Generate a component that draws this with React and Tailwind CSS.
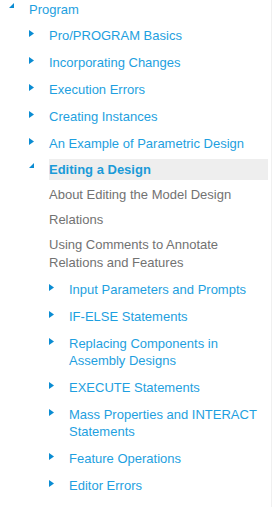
import React from 'react';

// ── Tree arrows ────────────────────────────────────────
function Closed() {
  return (
    <svg width="5" height="7" viewBox="0 0 5 7" className="shrink-0 mt-[3px]">
      <path d="M0 0L5 3.5L0 7Z" fill="#0b8cd2" />
    </svg>
  );
}

function Open() {
  return (
    <svg width="5" height="5" viewBox="0 0 5 5" className="shrink-0 mt-[2px]">
      <path d="M5 0V5H0Z" fill="#0b8cd2" />
    </svg>
  );
}

const topics = [
  'Pro/PROGRAM Basics',
  'Incorporating Changes',
  'Execution Errors',
  'Creating Instances',
  'An Example of Parametric Design',
];

const pages = [
  'About Editing the Model Design',
  'Relations',
  'Using Comments to Annotate Relations and Features',
];

const subTopics = [
  'Input Parameters and Prompts',
  'IF-ELSE Statements',
  'Replacing Components in Assembly Designs',
  'EXECUTE Statements',
  'Mass Properties and INTERACT Statements',
  'Feature Operations',
  'Editor Errors',
];

export default function App() {
  return (
    <div
      className="w-[272px] h-[507px] bg-white border-r border-[#f0f0f0] text-[13px] leading-[17px] text-[#1e9fe0]"
      style={{ fontFamily: '"Liberation Sans", Arial, sans-serif' }}
    >
      {/* Root */}
      <div className="flex pl-[9px] pt-[1px]">
        <div className="w-[20px]"><Open /></div>
        <span>Program</span>
      </div>

      {/* Level 1 */}
      <ul className="pl-[29px] pr-[3px]">
        {topics.map((t, i) => (
          <li key={t} className={`flex ${i === 0 ? 'mt-[9px]' : 'mt-[10px]'}`}>
            <div className="w-[20px]"><Closed /></div>
            <span>{t}</span>
          </li>
        ))}
        <li className="flex mt-[7px]">
          <div className="w-[20px] pt-[2px]"><Open /></div>
          <div className="flex-1">
            <div className="bg-[#eeeeee] py-[2px] font-bold text-[#1a9ad8]">Editing a Design</div>

            {/* Pages */}
            <ul className="text-[#727272] leading-[18px] mt-[6px]">
              {pages.map((p, i) => (
                <li key={p} className={i === 0 ? '' : 'mt-[7px]'}>{p}</li>
              ))}
            </ul>

            {/* Level 2 */}
            <ul className="mt-[9px]">
              {subTopics.map((s, i) => (
                <li key={s} className={`flex ${i === 0 ? '' : 'mt-[10px]'}`}>
                  <div className="w-[20px] shrink-0"><Closed /></div>
                  <span>{s}</span>
                </li>
              ))}
            </ul>
          </div>
        </li>
      </ul>
    </div>
  );
}
